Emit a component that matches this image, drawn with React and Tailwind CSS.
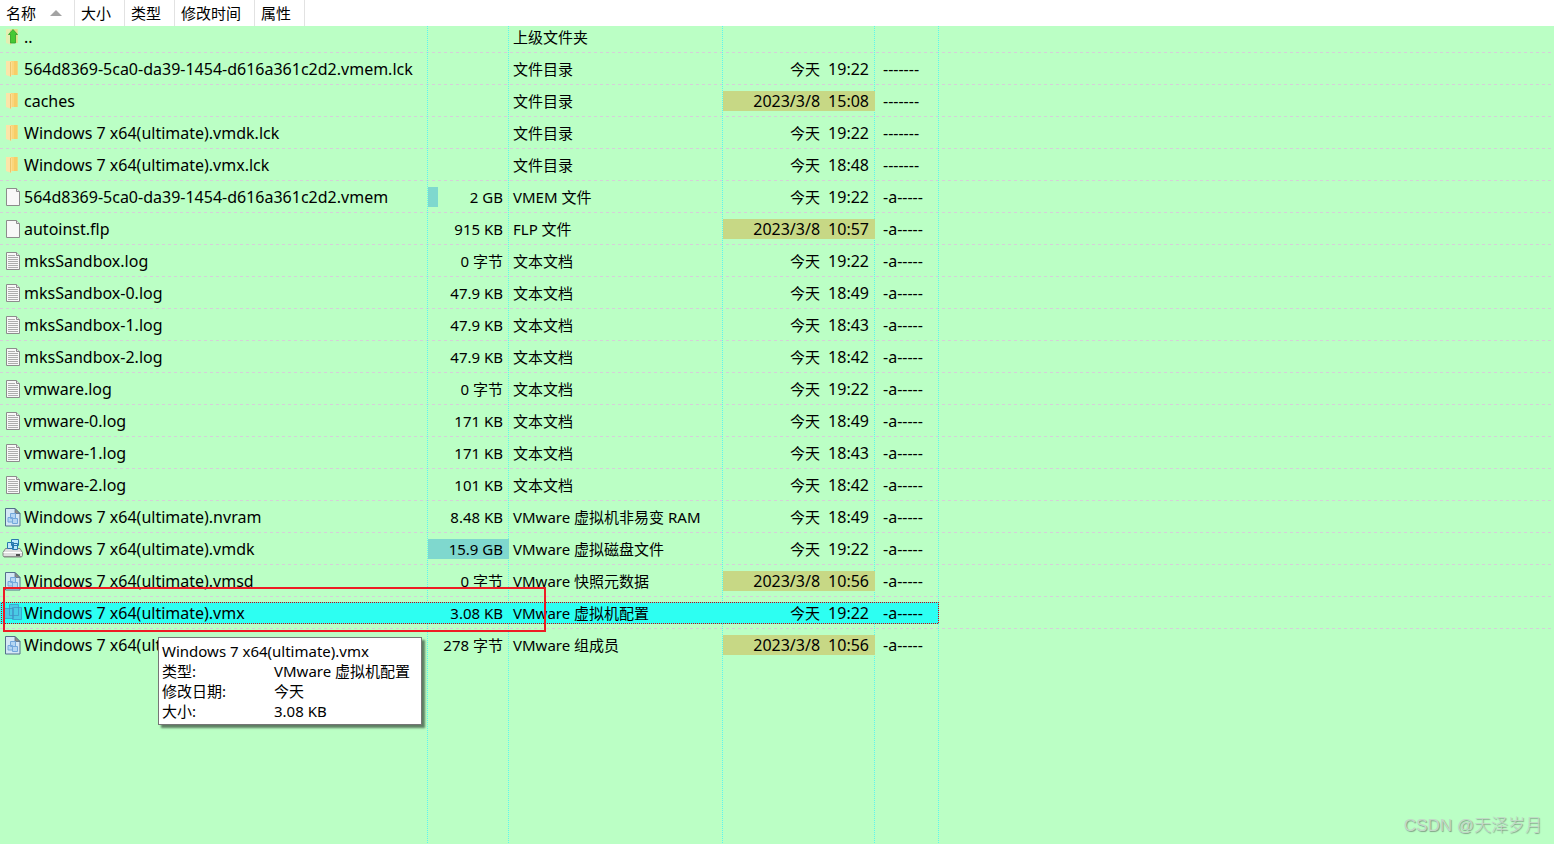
const dots = "bg-[repeating-linear-gradient(to_bottom,#5cf5ee_0_1px,transparent_1px_2px)] bg-[length:1px_100%] bg-right bg-no-repeat";
// same dotted line, for cells that start on an odd pixel row
const dotsOdd = "bg-[repeating-linear-gradient(to_bottom,transparent_0_1px,#5cf5ee_1px_2px)] bg-[length:1px_100%] bg-right bg-no-repeat";
const dashes = "bg-[repeating-linear-gradient(to_right,#d5cfd8_0_3px,transparent_3px_6px)] bg-[length:100%_1px] bg-bottom bg-no-repeat";

const headers = [
  { label: "名称", width: "w-[75px]", sorted: true },
  { label: "大小", width: "w-[50px]" },
  { label: "类型", width: "w-[50px]" },
  { label: "修改时间", width: "w-20" },
  { label: "属性", width: "w-[50px]" },
];

const columns = ["w-[428px]", "w-[81px]", "w-[214px]", "w-[152px]", "w-16"];

const files = [
  { icon: "up", name: "..", type: "上级文件夹" },
  { icon: "folder", name: "564d8369-5ca0-da39-1454-d616a361c2d2.vmem.lck", type: "文件目录", day: "今天", time: "19:22", attr: "-------" },
  { icon: "folder", name: "caches", type: "文件目录", day: "2023/3/8", time: "15:08", attr: "-------", old: true },
  { icon: "folder", name: "Windows 7 x64(ultimate).vmdk.lck", type: "文件目录", day: "今天", time: "19:22", attr: "-------" },
  { icon: "folder", name: "Windows 7 x64(ultimate).vmx.lck", type: "文件目录", day: "今天", time: "18:48", attr: "-------" },
  { icon: "file", name: "564d8369-5ca0-da39-1454-d616a361c2d2.vmem", size: "2 GB", bar: 12, type: "VMEM 文件", day: "今天", time: "19:22", attr: "-a-----" },
  { icon: "file", name: "autoinst.flp", size: "915 KB", type: "FLP 文件", day: "2023/3/8", time: "10:57", attr: "-a-----", old: true },
  { icon: "text", name: "mksSandbox.log", size: "0 字节", type: "文本文档", day: "今天", time: "19:22", attr: "-a-----" },
  { icon: "text", name: "mksSandbox-0.log", size: "47.9 KB", type: "文本文档", day: "今天", time: "18:49", attr: "-a-----" },
  { icon: "text", name: "mksSandbox-1.log", size: "47.9 KB", type: "文本文档", day: "今天", time: "18:43", attr: "-a-----" },
  { icon: "text", name: "mksSandbox-2.log", size: "47.9 KB", type: "文本文档", day: "今天", time: "18:42", attr: "-a-----" },
  { icon: "text", name: "vmware.log", size: "0 字节", type: "文本文档", day: "今天", time: "19:22", attr: "-a-----" },
  { icon: "text", name: "vmware-0.log", size: "171 KB", type: "文本文档", day: "今天", time: "18:49", attr: "-a-----" },
  { icon: "text", name: "vmware-1.log", size: "171 KB", type: "文本文档", day: "今天", time: "18:43", attr: "-a-----" },
  { icon: "text", name: "vmware-2.log", size: "101 KB", type: "文本文档", day: "今天", time: "18:42", attr: "-a-----" },
  { icon: "vm", name: "Windows 7 x64(ultimate).nvram", size: "8.48 KB", type: "VMware 虚拟机非易变 RAM", day: "今天", time: "18:49", attr: "-a-----" },
  { icon: "disk", name: "Windows 7 x64(ultimate).vmdk", size: "15.9 GB", bar: 100, type: "VMware 虚拟磁盘文件", day: "今天", time: "19:22", attr: "-a-----" },
  { icon: "vm", name: "Windows 7 x64(ultimate).vmsd", size: "0 字节", type: "VMware 快照元数据", day: "2023/3/8", time: "10:56", attr: "-a-----", old: true },
  { icon: "vmx", name: "Windows 7 x64(ultimate).vmx", size: "3.08 KB", type: "VMware 虚拟机配置", day: "今天", time: "19:22", attr: "-a-----", selected: true },
  { icon: "vm", name: "Windows 7 x64(ultimate).vmxf", size: "278 字节", type: "VMware 组成员", day: "2023/3/8", time: "10:56", attr: "-a-----", old: true, last: true },
];

function FileIcon({ kind }) {
  return (
    <svg className="h-5 w-5 shrink-0 overflow-visible" viewBox="0 0 20 20" aria-hidden="true">
      {(kind === "folder" || kind === "up") && (
        <g opacity={kind === "up" ? 0.65 : 1}>
          <path d="M6 2h7.500v14H6z" fill="#fbd67a" />
          <path d="M10 2h3.500v14H10z" fill="#f7cd68" />
          <path d="M2 2h4l1.500 1v15L2 16z" fill="#fbe5a9" />
          <path d="M6.500 3v14.500" stroke="#e8bd5c" strokeWidth=".8" />
        </g>
      )}
      {kind === "up" && (
        <path d="M9 2.500l4.500 5h-2v8.500h-5V7.500h-2z" fill="#46c934" stroke="#2f9f2a" strokeWidth=".8" />
      )}
      {(kind === "file" || kind === "text") && (
        <g>
          <path d="M2.500 1.500h10l3 3v14h-13z" fill="#f8f8f8" stroke="#8c8c8c" />
          <path d="M12.500 1.500v3h3" fill="#e4e4e4" stroke="#8c8c8c" />
        </g>
      )}
      {kind === "text" && (
        <path d="M4 4.500h7M4 6.500h10M4 8.500h10M4 10.500h10M4 12.500h10M4 14.500h10M4 16.500h10" stroke="#adadad" />
      )}
      {kind === "vm" && (
        <g>
          <path d="M1.500 1.500h9.500l5 5v12.500h-14.500z" fill="#d5e8f5" stroke="#536f8c" />
          <path d="M11 1.500v5h5z" fill="#8d8d82" stroke="#536f8c" strokeWidth=".8" />
          <path d="M6.500 6.500h5v5h-5zM4 10.500h4.500V15H4zM8.500 11.500h5v5h-5z" fill="#b4d6f2" stroke="#74a8dc" />
        </g>
      )}
      {kind === "disk" && (
        <g>
          <path d="M1.500 9.500h14.500l2.500 4v3l-1 1.500H0l-1-1.500v-3z" fill="#dedede" stroke="#707070" strokeWidth=".8" strokeLinejoin="round" />
          <path d="M-.5 13.500h18.500" stroke="#fff" />
          <path d="M-.5 17.500h18" stroke="#8f8f8f" />
          <path d="M12 16h4" stroke="#222" strokeWidth="1.500" />
          <path d="M7.500 .5h7v6h-7zM3.500 3.500h6v6h-6zM8.500 4.500h5v6h-5z" fill="#bfe7fb" stroke="#2878ae" />
        </g>
      )}
      {kind === "vmx" && (
        <g fill="#5aa9dc" fillOpacity=".6" stroke="#3f8fc4" strokeOpacity=".7">
          <path d="M5.500 1.500h9v11h-9zM.5 5.500h9v10h-9zM8.500 4.500h9v12h-9z" />
        </g>
      )}
    </svg>
  );
}

// dotted focus rectangle round the selected row
function FocusRect() {
  return (
    <span className="pointer-events-none absolute top-[5px] left-px z-10 h-[22px] w-[938px]">
      <span className="absolute inset-x-0 top-0 h-px bg-[repeating-linear-gradient(to_right,transparent_0_1px,#d2000d_1px_2px)]" />
      <span className="absolute inset-x-0 bottom-0 h-px bg-[repeating-linear-gradient(to_right,#d2000d_0_1px,transparent_1px_2px)]" />
      <span className="absolute inset-y-0 left-0 w-px bg-[repeating-linear-gradient(to_bottom,transparent_0_1px,#d2000d_1px_2px)]" />
      <span className="absolute inset-y-0 right-0 w-px bg-[repeating-linear-gradient(to_bottom,#d2000d_0_1px,transparent_1px_2px)]" />
    </span>
  );
}

function FileRow({ file, first }) {
  const cell = `p-0 ${first ? dots : dotsOdd}`;
  const box = file.selected ? "h-[22px] bg-[#2dfff2]" : "h-5";
  const pad = file.selected ? "py-[5px]" : first ? "pt-px pb-[6px]" : "py-[6px]";

  return (
    <tr className={file.last ? "" : dashes} aria-selected={!!file.selected}>
      <td className={`relative ${cell}`}>
        <div className={pad}>
          <div className={`flex items-center pl-1 text-base leading-5 ${box}`}>
            <FileIcon kind={file.icon} />
            <span>{file.name}</span>
          </div>
        </div>
        {file.selected && <FocusRect />}
      </td>
      <td className={cell}>
        <div className={pad}>
          <div className={`relative flex items-center justify-end pr-[6px] ${box}`}>
            {file.bar && (
              <span className="absolute inset-y-0 left-0 bg-[#7fd8ce]" style={{ width: `${file.bar}%` }} />
            )}
            <span className="relative">{file.size}</span>
          </div>
        </div>
      </td>
      <td className={cell}>
        <div className={pad}>
          <div className={`flex items-center pl-1 ${box}`}>{file.type}</div>
        </div>
      </td>
      <td className={cell}>
        <div className={pad}>
          <div className={`flex items-center justify-end gap-2 pr-[6px] ${box} ${file.old ? "bg-[#c7d885] text-base leading-5" : ""}`}>
            <span>{file.day}</span>
            <span className="text-base leading-5">{file.time}</span>
          </div>
        </div>
      </td>
      <td className={cell}>
        <div className={pad}>
          <div className={`flex items-center pl-2 text-base leading-5 ${box}`}>{file.attr}</div>
        </div>
      </td>
      <td className="p-0" />
    </tr>
  );
}

export default function App() {
  return (
    <div className="relative flex min-h-screen flex-col bg-[#bbffc5] font-['Noto_Sans','Noto_Sans_CJK_SC',sans-serif] text-[15px] leading-5 whitespace-nowrap text-black">
      {/* HEADER */}
      <div className="flex h-[26px] bg-white">
        {headers.map((h) => (
          <button key={h.label} type="button" className={`flex items-center gap-[14px] border-r border-[#e2e2e2] pl-[6px] ${h.width}`}>
            {h.label}
            {h.sorted && (
              <svg className="h-[6px] w-3 shrink-0" viewBox="0 0 12 6" aria-hidden="true">
                <path d="M0 6l6-6 6 6z" fill="#a3a3a3" />
              </svg>
            )}
          </button>
        ))}
      </div>

      {/* FILE LIST */}
      <table className="w-full table-fixed border-collapse">
        <colgroup>
          {columns.map((w) => (
            <col key={w} className={w} />
          ))}
          <col />
        </colgroup>
        <tbody>
          {files.map((file, i) => (
            <FileRow key={file.name} file={file} first={i === 0} />
          ))}
        </tbody>
      </table>

      {/* EMPTY AREA */}
      <div className="flex flex-1">
        {columns.map((w) => (
          <div key={w} className={`${w} ${dotsOdd}`} />
        ))}
      </div>

      {/* SELECTION FRAME */}
      <div className="pointer-events-none absolute top-[587px] left-[3px] z-20 h-[45px] w-[543px] border-2 border-[#ed1c24]" />

      {/* TOOLTIP */}
      <div role="tooltip" className="absolute top-[637px] left-[158px] z-20 w-[264px] border border-[#767676] bg-white px-[3px] py-[3px] shadow-[3px_3px_2px_rgba(0,0,0,0.5)]">
        <p>Windows 7 x64(ultimate).vmx</p>
        <dl className="grid grid-cols-[112px_1fr]">
          <dt>类型:</dt>
          <dd>VMware 虚拟机配置</dd>
          <dt>修改日期:</dt>
          <dd>今天</dd>
          <dt>大小:</dt>
          <dd>3.08 KB</dd>
        </dl>
      </div>

      {/* WATERMARK */}
      <div className="absolute right-3 bottom-2 font-['Liberation_Sans','Noto_Sans_CJK_SC',sans-serif] text-[17px] font-light text-[#c4d6c8] [text-shadow:1px_1px_1px_#7f9f86]">
        CSDN @天泽岁月
      </div>
    </div>
  );
}
